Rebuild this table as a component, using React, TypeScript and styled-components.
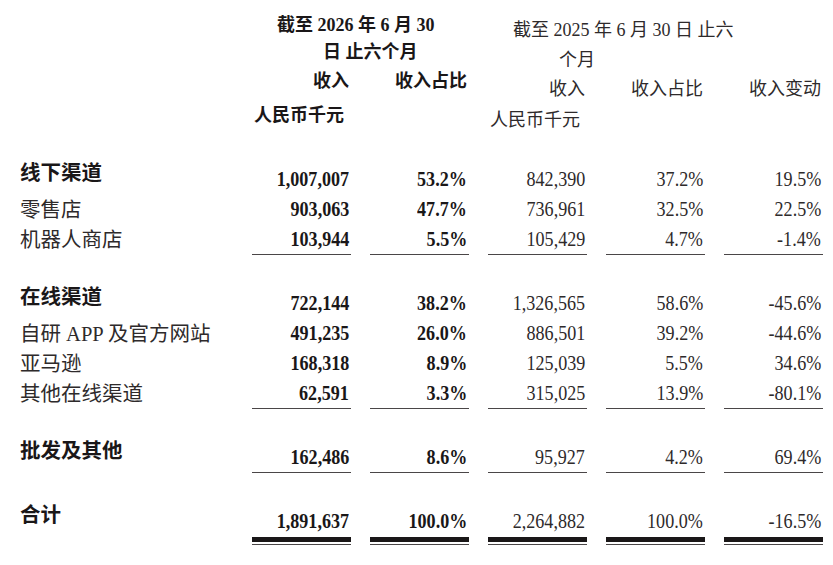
import React from 'react';
import styled, { createGlobalStyle } from 'styled-components';

type RowData = { label: string; values: string[]; head?: boolean };
type GroupData = { rows: RowData[]; total?: boolean };

const groups: GroupData[] = [
  {
    rows: [
      { label: '线下渠道', values: ['1,007,007', '53.2%', '842,390', '37.2%', '19.5%'], head: true },
      { label: '零售店', values: ['903,063', '47.7%', '736,961', '32.5%', '22.5%'] },
      { label: '机器人商店', values: ['103,944', '5.5%', '105,429', '4.7%', '-1.4%'] },
    ],
  },
  {
    rows: [
      { label: '在线渠道', values: ['722,144', '38.2%', '1,326,565', '58.6%', '-45.6%'], head: true },
      { label: '自研 APP 及官方网站', values: ['491,235', '26.0%', '886,501', '39.2%', '-44.6%'] },
      { label: '亚马逊', values: ['168,318', '8.9%', '125,039', '5.5%', '34.6%'] },
      { label: '其他在线渠道', values: ['62,591', '3.3%', '315,025', '13.9%', '-80.1%'] },
    ],
  },
  {
    rows: [{ label: '批发及其他', values: ['162,486', '8.6%', '95,927', '4.2%', '69.4%'], head: true }],
  },
  {
    total: true,
    rows: [{ label: '合计', values: ['1,891,637', '100.0%', '2,264,882', '100.0%', '-16.5%'], head: true }],
  },
];

const GlobalStyle = createGlobalStyle`
  html, body {
    margin: 0;
    padding: 0;
    background: #ffffff;
  }
  body {
    font-family: "Liberation Serif", "Noto Sans CJK SC", serif;
    color: #231f20;
  }
`;

const Page = styled.div`
  width: 833px;
  height: 565px;
  box-sizing: border-box;
  padding: 12px 10px 0 20px;
  overflow: hidden;
`;

const Columns = styled.div`
  display: grid;
  grid-template-columns: 1fr repeat(5, 99px);
  column-gap: 19px;
`;

const PeriodBlock = styled.div<{ $bold?: boolean; $span: string }>`
  grid-column: ${(p) => p.$span};
  padding-top: ${(p) => (p.$bold ? '0' : '3px')};
  font-size: 18px;
  font-weight: ${(p) => (p.$bold ? 700 : 400)};
  color: ${(p) => (p.$bold ? '#1a1718' : '#2e2a2b')};
`;

const PeriodLine = styled.div<{ $indent: number; $lh: number }>`
  padding-left: ${(p) => p.$indent}px;
  line-height: ${(p) => p.$lh}px;
  white-space: nowrap;
`;

const TitleRow = styled.div<{ $count: number; $lh: number }>`
  display: grid;
  grid-template-columns: repeat(${(p) => p.$count}, 99px);
  column-gap: 19px;
  line-height: ${(p) => p.$lh}px;
`;

const Title = styled.div`
  text-align: right;
  padding-right: 2px;
  white-space: nowrap;
`;

const Unit = styled.div<{ $lh: number }>`
  line-height: ${(p) => p.$lh}px;
  padding-left: 2px;
  white-space: nowrap;
`;

const Table = styled.div`
  margin-top: 28px;
`;

const Group = styled.div<{ $first?: boolean }>`
  margin-top: ${(p) => (p.$first ? '0' : '34px')};
`;

const Row = styled(Columns)`
  height: 30px;
`;

const Label = styled.div<{ $head?: boolean }>`
  font-size: 20.5px;
  line-height: ${(p) => (p.$head ? '16px' : '30px')};
  font-weight: ${(p) => (p.$head ? 700 : 400)};
  color: ${(p) => (p.$head ? '#1a1718' : '#2e2a2b')};
  white-space: nowrap;
`;

const Value = styled.div<{ $bold?: boolean; $rule?: boolean; $double?: boolean }>`
  box-sizing: border-box;
  height: ${(p) => (p.$double ? '35px' : '30px')};
  line-height: 29px;
  font-size: 21px;
  text-align: right;
  padding-right: 2px;
  font-weight: ${(p) => (p.$bold ? 700 : 400)};
  color: ${(p) => (p.$bold ? '#1a1718' : '#2e2a2b')};
  border-bottom: ${(p) => (p.$double ? '5px solid #1a1718' : p.$rule ? '1px solid #4a4647' : 'none')};
  box-shadow: ${(p) => (p.$double ? '0 2px 0 #ffffff, 0 3px 0 #4a4647' : 'none')};
`;

/* the print face is a condensed Times, so narrow the figures a little */
const Figure = styled.span`
  display: inline-block;
  transform: scaleX(0.86);
  transform-origin: right center;
`;

function Header() {
  return (
    <Columns>
      <PeriodBlock $bold $span="2 / 4">
        <PeriodLine $indent={25} $lh={27}>截至 2026 年 6 月 30</PeriodLine>
        <PeriodLine $indent={71} $lh={27}>日 止六个月</PeriodLine>
        <TitleRow $count={2} $lh={30}>
          <Title>收入</Title>
          <Title>收入占比</Title>
        </TitleRow>
        <Unit $lh={38}>人民币千元</Unit>
      </PeriodBlock>
      <PeriodBlock $span="4 / 7">
        <PeriodLine $indent={25} $lh={30}>截至 2025 年 6 月 30 日 止六</PeriodLine>
        <PeriodLine $indent={71} $lh={30}>个月</PeriodLine>
        <TitleRow $count={3} $lh={28}>
          <Title>收入</Title>
          <Title>收入占比</Title>
          <Title>收入变动</Title>
        </TitleRow>
        <Unit $lh={34}>人民币千元</Unit>
      </PeriodBlock>
    </Columns>
  );
}

export default function App() {
  return (
    <Page>
      <GlobalStyle />
      <Header />
      <Table>
        {groups.map((group, gi) => (
          <Group key={gi} $first={gi === 0}>
            {group.rows.map((row, ri) => {
              const last = ri === group.rows.length - 1;
              return (
                <Row key={ri}>
                  <Label $head={row.head}>{row.label}</Label>
                  {row.values.map((v, vi) => (
                    <Value
                      key={vi}
                      $bold={vi < 2}
                      $rule={last && !group.total}
                      $double={last && group.total}
                    >
                      <Figure>{v}</Figure>
                    </Value>
                  ))}
                </Row>
              );
            })}
          </Group>
        ))}
      </Table>
    </Page>
  );
}
